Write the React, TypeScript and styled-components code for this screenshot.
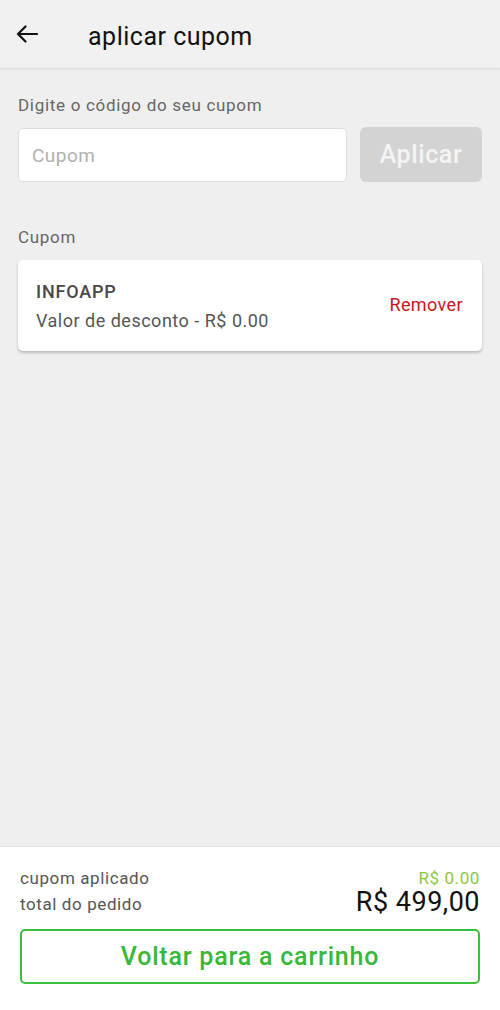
import React from "react";
import styled, { createGlobalStyle } from "styled-components";

const GlobalStyle = createGlobalStyle`
  html, body {
    margin: 0;
    padding: 0;
    background: #efefef;
  }
  * {
    box-sizing: border-box;
  }
  body {
    font-family: Roboto, "Noto Sans", Arial, sans-serif;
  }
`;

const Screen = styled.div`
  width: 500px;
  height: 1010px;
  display: flex;
  flex-direction: column;
  background: #efefef;
`;

const Header = styled.div`
  height: 69px;
  flex-shrink: 0;
  display: flex;
  align-items: center;
  padding-left: 16px;
  background: #f1f1f1;
  border-bottom: 1px solid #dcdcdc;
  box-shadow: 0 1px 2px rgba(0, 0, 0, 0.06);
`;

const BackButton = styled.button`
  width: 22px;
  height: 22px;
  padding: 0;
  border: none;
  background: none;
  display: flex;
  align-items: center;
  justify-content: center;
  margin-right: 50px;
`;

const Title = styled.h1`
  margin: 0;
  padding-top: 4px;
  font-size: 25px;
  font-weight: 400;
  letter-spacing: 0.5px;
  color: #111;
`;

const Content = styled.div`
  flex: 1;
  padding: 24px 18px 0;
`;

const SectionLabel = styled.div`
  font-size: 17px;
  letter-spacing: 0.7px;
  color: #666;
  line-height: 24px;
`;

const InputRow = styled.div`
  display: flex;
  gap: 13px;
  margin-top: 11px;
  align-items: stretch;
`;

const CouponInput = styled.input`
  flex: 1;
  height: 54px;
  border: 1px solid #dedede;
  border-radius: 5px;
  background: #fff;
  padding: 0 13px;
  font-size: 19px;
  letter-spacing: 0.5px;
  font-family: inherit;
  color: #333;
  outline: none;
  &::placeholder {
    color: #b0b0b0;
  }
`;

const ApplyButton = styled.button`
  width: 122px;
  height: 55px;
  margin-top: -1px;
  border: none;
  border-radius: 6px;
  background: #d3d3d3;
  color: #f4f4f4;
  font-family: inherit;
  font-size: 25px;
  letter-spacing: 0.6px;
  font-weight: 500;
`;

const CouponSection = styled.div`
  margin-top: 43px;
`;

const CouponCard = styled.div`
  margin-top: 11px;
  height: 91px;
  background: #fff;
  border-radius: 5px;
  box-shadow: 0 2px 3px rgba(0, 0, 0, 0.22);
  display: flex;
  align-items: center;
  justify-content: space-between;
  padding: 0 19px 0 18px;
`;

const CouponInfo = styled.div`
  display: flex;
  flex-direction: column;
  gap: 8px;
`;

const CouponCode = styled.div`
  font-size: 18px;
  font-weight: 500;
  letter-spacing: 0.8px;
  color: #484848;
`;

const CouponDiscount = styled.div`
  font-size: 18px;
  letter-spacing: 0.5px;
  color: #555;
`;

const RemoveLink = styled.span`
  font-size: 18px;
  letter-spacing: 0.4px;
  color: #c8161d;
  margin-top: -2px;
`;

const Footer = styled.div`
  flex-shrink: 0;
  height: 164px;
  background: #fff;
  border-top: 1px solid #e4e4e4;
  padding: 20px 20px 0;
`;

const SummaryRow = styled.div`
  display: flex;
  justify-content: space-between;
  align-items: flex-end;
`;

const SummaryLabel = styled.span`
  font-size: 17px;
  letter-spacing: 0.6px;
  color: #555;
  line-height: 22px;
`;

const SummaryValue = styled.span<{ $big?: boolean; $accent?: boolean }>`
  font-size: ${(p) => (p.$big ? "27px" : "17px")};
  letter-spacing: ${(p) => (p.$big ? "0.5px" : "0.6px")};
  color: ${(p) => (p.$accent ? "#8dc63f" : "#111")};
  line-height: ${(p) => (p.$big ? "26px" : "22px")};
  font-weight: 400;
`;

const BackToCart = styled.button`
  width: 100%;
  height: 55px;
  margin-top: 14px;
  border: 2px solid #3cbf3c;
  border-radius: 5px;
  background: #fff;
  color: #38b838;
  font-family: inherit;
  font-size: 25px;
  letter-spacing: 0.8px;
  font-weight: 500;
`;

const BackArrow = () => (
  <svg width="22" height="18" viewBox="0 0 22 18" fill="none">
    <path
      d="M21 9H2M9.5 1.5L2 9l7.5 7.5"
      stroke="#111"
      strokeWidth="2.2"
      strokeLinecap="round"
      strokeLinejoin="round"
    />
  </svg>
);

export default function App() {
  return (
    <>
      <GlobalStyle />
      <Screen>
        <Header>
          <BackButton aria-label="voltar">
            <BackArrow />
          </BackButton>
          <Title>aplicar cupom</Title>
        </Header>
        <Content>
          <SectionLabel>Digite o código do seu cupom</SectionLabel>
          <InputRow>
            <CouponInput placeholder="Cupom" />
            <ApplyButton>Aplicar</ApplyButton>
          </InputRow>
          <CouponSection>
            <SectionLabel>Cupom</SectionLabel>
            <CouponCard>
              <CouponInfo>
                <CouponCode>INFOAPP</CouponCode>
                <CouponDiscount>Valor de desconto - R$ 0.00</CouponDiscount>
              </CouponInfo>
              <RemoveLink>Remover</RemoveLink>
            </CouponCard>
          </CouponSection>
        </Content>
        <Footer>
          <SummaryRow>
            <SummaryLabel>cupom aplicado</SummaryLabel>
            <SummaryValue $accent>R$ 0.00</SummaryValue>
          </SummaryRow>
          <SummaryRow>
            <SummaryLabel>total do pedido</SummaryLabel>
            <SummaryValue $big>R$ 499,00</SummaryValue>
          </SummaryRow>
          <BackToCart>Voltar para a carrinho</BackToCart>
        </Footer>
      </Screen>
    </>
  );
}
